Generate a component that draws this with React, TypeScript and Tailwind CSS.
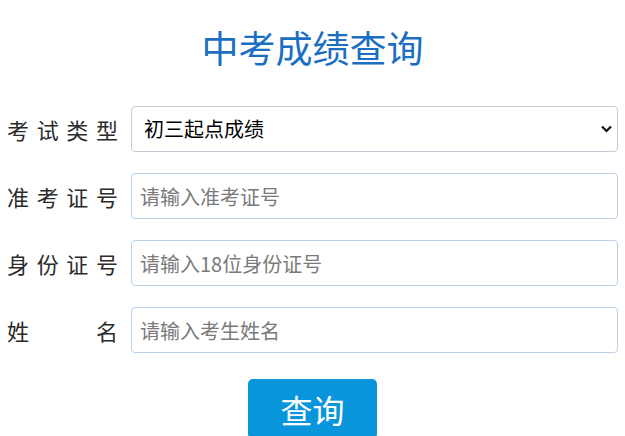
import React, { useState } from "react";

const font = { fontFamily: '"Noto Sans CJK SC", "Liberation Sans", sans-serif' };

const Label: React.FC<{ text: string }> = ({ text }) => (
  <label className="w-[111px] shrink-0 text-[22px] leading-none text-[#2b2b2b] text-justify [text-align-last:justify]">
    {text.split("").join(" ")}
  </label>
);

export default function App() {
  const [form, setForm] = useState({ type: "1", ticket: "", idcard: "", name: "" });

  const handleChange = (e: React.ChangeEvent<HTMLInputElement | HTMLSelectElement>) => {
    setForm({ ...form, [e.target.name]: e.target.value });
  };

  const inputCls =
    "h-[46px] flex-1 min-w-0 rounded-[4px] border border-[#b9d1e8] bg-white px-[8px] text-[20px] text-black placeholder:text-[#7a7a7a] outline-none";

  return (
    <div className="min-h-[436px] bg-white px-[7px] pt-[23px]" style={font}>
      <h1 className="text-center text-[37px] leading-[48px] text-[#1b6ec2]">中考成绩查询</h1>

      <form className="mt-[35px] flex flex-col gap-[21px]" onSubmit={(e) => e.preventDefault()}>
        <div className="flex items-center gap-[13px]">
          <Label text="考试类型" />
          <div className="relative flex flex-1">
            <select
              name="type"
              value={form.type}
              onChange={handleChange}
              className="h-[46px] flex-1 appearance-none rounded-[4px] border border-[#c3cdd8] bg-white pl-[12px] text-[20px] text-black outline-none"
            >
              <option value="1">初三起点成绩</option>
              <option value="2">初二起点成绩</option>
            </select>
            <svg
              className="pointer-events-none absolute right-[6px] top-[19px]"
              width="11"
              height="8"
              viewBox="0 0 11 8"
            >
              <path d="M1 1.5 L5.5 6 L10 1.5" fill="none" stroke="#111" strokeWidth="2.2" />
            </svg>
          </div>
        </div>

        <div className="flex items-center gap-[13px]">
          <Label text="准考证号" />
          <input name="ticket" value={form.ticket} onChange={handleChange} placeholder="请输入准考证号" className={inputCls} />
        </div>

        <div className="flex items-center gap-[13px]">
          <Label text="身份证号" />
          <input name="idcard" value={form.idcard} onChange={handleChange} placeholder="请输入18位身份证号" className={inputCls} />
        </div>

        <div className="flex items-center gap-[13px]">
          <Label text="姓名" />
          <input name="name" value={form.name} onChange={handleChange} placeholder="请输入考生姓名" className={inputCls} />
        </div>

        <div className="mt-[5px] flex justify-center">
          <button
            type="submit"
            className="h-[60px] w-[129px] rounded-[5px] bg-[#0895dc] text-[32px] leading-none text-white"
          >
            查询
          </button>
        </div>
      </form>
    </div>
  );
}
